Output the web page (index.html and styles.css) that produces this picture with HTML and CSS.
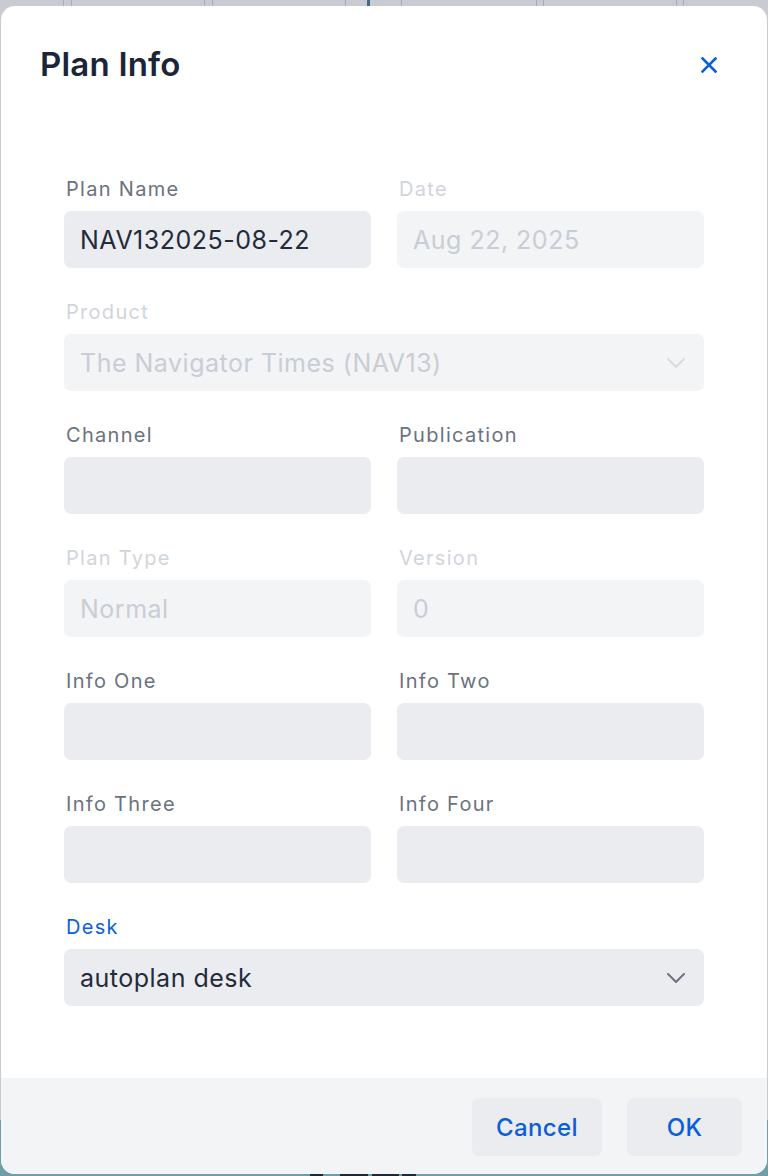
FILE: index.html
```html
<!DOCTYPE html>
<html lang="en">
<head>
<meta charset="utf-8">
<title>Plan Info</title>
<link rel="stylesheet" href="styles.css">
</head>
<body>
<div class="backdrop-top"></div>
<div class="modal">
  <div class="modal-header">
    <h1 class="modal-title">Plan Info</h1>
    <button class="close-btn" aria-label="Close">
      <svg width="16" height="16" viewBox="0 0 16 16"><path d="M1.5 1.5 L14.5 14.5 M14.5 1.5 L1.5 14.5" stroke="#0a5fd8" stroke-width="2.6" stroke-linecap="square" fill="none"/></svg>
    </button>
  </div>
  <div class="modal-body">
    <div class="form-grid">
      <div class="field">
        <label class="label">Plan Name</label>
        <div class="input">NAV132025-08-22</div>
      </div>
      <div class="field disabled">
        <label class="label">Date</label>
        <div class="input">Aug 22, 2025</div>
      </div>
      <div class="field disabled span-2">
        <label class="label">Product</label>
        <div class="input select">The Navigator Times (NAV13)
          <svg class="chev" width="18" height="10" viewBox="0 0 18 10"><path d="M1 1 L9 9 L17 1" stroke="currentColor" stroke-width="2" fill="none" stroke-linecap="round" stroke-linejoin="round"/></svg>
        </div>
      </div>
      <div class="field">
        <label class="label">Channel</label>
        <div class="input"></div>
      </div>
      <div class="field">
        <label class="label">Publication</label>
        <div class="input"></div>
      </div>
      <div class="field disabled">
        <label class="label">Plan Type</label>
        <div class="input">Normal</div>
      </div>
      <div class="field disabled">
        <label class="label">Version</label>
        <div class="input">0</div>
      </div>
      <div class="field">
        <label class="label">Info One</label>
        <div class="input"></div>
      </div>
      <div class="field">
        <label class="label">Info Two</label>
        <div class="input"></div>
      </div>
      <div class="field">
        <label class="label">Info Three</label>
        <div class="input"></div>
      </div>
      <div class="field">
        <label class="label">Info Four</label>
        <div class="input"></div>
      </div>
      <div class="field focused span-2">
        <label class="label">Desk</label>
        <div class="input select">autoplan desk
          <svg class="chev" width="18" height="10" viewBox="0 0 18 10"><path d="M1 1 L9 9 L17 1" stroke="currentColor" stroke-width="2" fill="none" stroke-linecap="round" stroke-linejoin="round"/></svg>
        </div>
      </div>
    </div>
  </div>
  <div class="modal-footer">
    <button class="btn btn-cancel">Cancel</button>
    <button class="btn btn-ok">OK</button>
  </div>
</div>
<div class="backdrop-bottom"></div>
</body>
</html>
```
FILE: styles.css
```css
* { box-sizing: border-box; }
html, body { margin: 0; padding: 0; }
body {
  width: 768px;
  height: 1176px;
  overflow: hidden;
  font-family: Inter, "Noto Sans", "Liberation Sans", sans-serif;
  background: linear-gradient(to bottom, #c8cbd2 0, #c8cbd2 1120px, #6e9ea6 1120px, #6e9ea6 100%);
}
.backdrop-top {
  height: 6px;
  background:
    linear-gradient(to right,
      transparent 63px, #a7abb3 63px, #a7abb3 64px, transparent 64px,
      transparent 71px, #a7abb3 71px, #a7abb3 72px, transparent 72px,
      transparent 204px, #a7abb3 204px, #a7abb3 205px, transparent 205px,
      transparent 212px, #a7abb3 212px, #a7abb3 213px, transparent 213px,
      transparent 345px, #a7abb3 345px, #a7abb3 346px, transparent 346px,
      transparent 367px, #3d6a84 367px, #3d6a84 370px, transparent 370px,
      transparent 401px, #a7abb3 401px, #a7abb3 402px, transparent 402px,
      transparent 536px, #a7abb3 536px, #a7abb3 537px, transparent 537px,
      transparent 543px, #a7abb3 543px, #a7abb3 544px, transparent 544px,
      transparent 676px, #a7abb3 676px, #a7abb3 677px, transparent 677px,
      transparent 683px, #a7abb3 683px, #a7abb3 684px, transparent 684px),
    #c8cbd2;
}
.modal {
  margin-left: 1px;
  width: 766px;
  height: 1168px;
  background: #ffffff;
  border-radius: 14px;
  overflow: hidden;
  display: flex;
  flex-direction: column;
}
.modal-header {
  display: flex;
  align-items: flex-start;
  justify-content: space-between;
  padding: 40px 40px 0 39px;
  height: 78px;
}
.modal-title {
  margin: 0;
  font-size: 33px;
  line-height: 36px;
  font-weight: 600;
  color: #1b2537;
  letter-spacing: 0.2px;
}
.close-btn {
  border: 0;
  background: transparent;
  padding: 0;
  width: 16px;
  height: 16px;
  display: flex;
  margin-top: 11px;
  margin-right: 10px;
}
.modal-body {
  flex: 1;
  padding: 92px 63px 0 63px;
}
.form-grid {
  display: grid;
  grid-template-columns: 1fr 1fr;
  column-gap: 26px;
  row-gap: 31px;
}
.span-2 { grid-column: span 2; }
.field {
  display: flex;
  flex-direction: column;
  gap: 8px;
}
.label {
  font-size: 20px;
  line-height: 27px;
  font-weight: 400;
  color: #6b7280;
  letter-spacing: 1.3px;
  padding-left: 2px;
}
.input {
  height: 57px;
  border-radius: 7px;
  background: #ebecf0;
  color: #232b3a;
  font-size: 25px;
  letter-spacing: 0.5px;
  padding: 0 15px 0 16px;
  display: flex;
  align-items: center;
  justify-content: space-between;
}
.chev { color: #6b7280; margin-right: 4px; }
.disabled .label { color: #d1d5db; }
.disabled .input { background: #f3f4f6; color: #c9cdd4; }
.disabled .chev { color: #d8dbe0; }
.focused .label { color: #0a5fd8; }
.modal-footer {
  height: 96px;
  background: #f3f4f6;
  display: flex;
  justify-content: flex-end;
  align-items: flex-start;
  gap: 25px;
  padding: 20px 25px 0 0;
}
.btn {
  height: 58px;
  min-width: 115px;
  padding: 0 24px;
  border: 0;
  border-radius: 7px;
  background: #ebecf0;
  color: #0a5fd8;
  font-family: Inter, "Noto Sans", "Liberation Sans", sans-serif;
  font-size: 24px;
  font-weight: 500;
  letter-spacing: 0.4px;
}
.backdrop-bottom {
  height: 2px;
  background:
    linear-gradient(to right,
      transparent 310px, #1f2a33 310px, #1f2a33 323px, transparent 323px,
      transparent 340px, #1f2a33 340px, #1f2a33 368px, transparent 368px,
      transparent 372px, #1f2a33 372px, #1f2a33 399px, transparent 399px,
      transparent 402px, #1f2a33 402px, #1f2a33 416px, transparent 416px),
    #6e9ea6;
}
```
